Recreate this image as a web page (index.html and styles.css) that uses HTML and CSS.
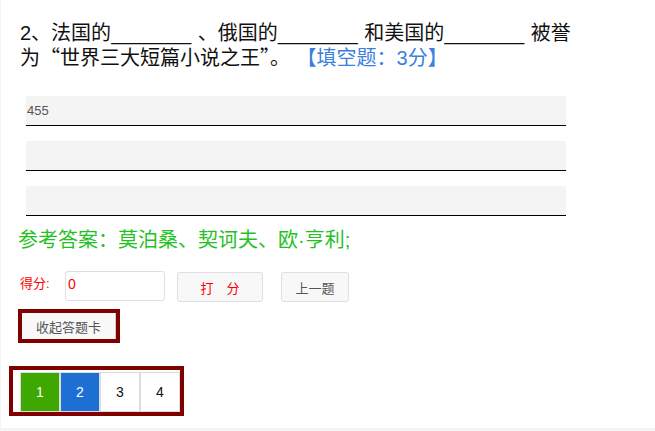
FILE: index.html
```html
<!DOCTYPE html>
<html lang="zh-CN">
<head>
<meta charset="utf-8">
<link rel="stylesheet" href="styles.css">
</head>
<body>
<div class="page">
  <div class="question">2、法国的<span class="ul">________</span> 、俄国的<span class="ul">________</span> 和美国的<span class="ul">________</span> 被誉为<span class="fw">“</span>世界三大短篇小说之王<span class="fw">”</span>。 <span class="qtype">【填空题：3分】</span></div>
  <div class="blanks">
    <div class="blank">455</div>
    <div class="blank"></div>
    <div class="blank"></div>
  </div>
  <div class="answer">参考答案：莫泊桑、契诃夫、欧·亨利;</div>
  <div class="score-row">
    <span class="score-label">得分:</span>
    <div class="score-input">0</div>
    <button class="btn btn-score">打　分</button>
    <button class="btn btn-prev">上一题</button>
  </div>
  <div class="toggle-wrap"><button class="btn btn-toggle">收起答题卡</button></div>
  <div class="card">
    <div class="cell done">1</div>
    <div class="cell current">2</div>
    <div class="cell">3</div>
    <div class="cell">4</div>
  </div>
</div>
</body>
</html>
```

FILE: styles.css
```css
html, body {
  margin: 0;
  padding: 0;
  background: #f4f4f4;
}
body {
  font-family: "Liberation Sans", "Noto Sans CJK SC", sans-serif;
  color: #111;
}
.page {
  margin-left: 1px;
  height: 428px;
  background: #fff;
  padding: 21px 0 0 19px;
  box-sizing: border-box;
}
.question {
  width: 560px;
  font-size: 20px;
  line-height: 25px;
  word-spacing: 1px;
}
.ul {
  font-family: "DejaVu Sans", sans-serif;
  line-height: 1;
}
.fw {
  font-family: "Noto Sans CJK SC", sans-serif;
  font-feature-settings: "fwid";
  line-height: 1;
}
.qtype {
  color: #3b7fe0;
}
.blanks {
  margin: 25px 0 0 6px;
  display: flex;
  flex-direction: column;
  gap: 15px;
}
.blank {
  width: 540px;
  height: 30px;
  box-sizing: border-box;
  background: #f4f4f4;
  border-bottom: 1px solid #000;
  border-radius: 2px 2px 0 0;
  font-size: 13px;
  color: #555;
  line-height: 29px;
  padding-left: 1px;
}
.answer {
  margin: 12px 0 0 -2px;
  font-size: 20px;
  line-height: 25px;
  color: #1fc21f;
}
.score-row {
  margin-top: 18px;
  display: flex;
  align-items: flex-start;
  height: 30px;
}
.score-label {
  color: #f00;
  font-size: 13px;
  width: 45px;
  line-height: 26px;
}
.score-input {
  width: 100px;
  height: 30px;
  box-sizing: border-box;
  border: 1px solid #dcdfe6;
  border-radius: 3px;
  color: #f00;
  font-size: 14px;
  line-height: 24px;
  padding-left: 2px;
}
.btn {
  font-family: inherit;
  font-size: 13px;
  height: 30px;
  box-sizing: border-box;
  background: #f8f8f8;
  border: 1px solid #dcdfe6;
  border-radius: 3px;
  padding: 0;
  color: #555;
}
.btn-score {
  width: 86px;
  margin-left: 12px;
  color: #f00;
  margin-top: 1px;
}
.btn-prev {
  width: 68px;
  margin-left: 18px;
  margin-top: 1px;
}
.toggle-wrap {
  display: flex;
  width: fit-content;
  margin: 8px 0 0 -2px;
  border: 4px solid #800000;
}
.btn-toggle {
  width: 94px;
  height: 26px;
  border-radius: 0;
  border: none;
  border-right: 1px solid #ccc;
}
.card {
  display: flex;
  width: fit-content;
  margin: 23px 0 0 -11px;
  border: 4px solid #800000;
  padding: 2px 0 0 7px;
}
.cell {
  width: 40px;
  height: 40px;
  box-sizing: border-box;
  border: 1px solid #ddd;
  display: flex;
  align-items: center;
  justify-content: center;
  font-size: 14px;
  color: #111;
  background: #fff;
}
.cell.done { background: #3ea800; color: #fff; }
.cell.current { background: #1e6fd4; color: #fff; }
```
